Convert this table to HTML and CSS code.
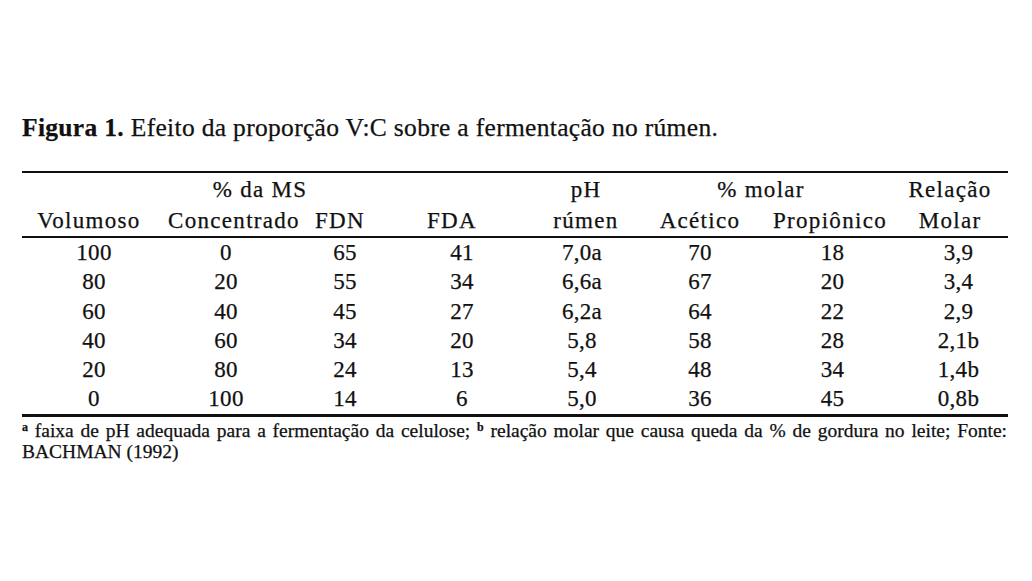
FILE: index.html
```html
<!DOCTYPE html>
<html lang="pt">
<head>
<meta charset="utf-8">
<title>Figura 1</title>
<link rel="stylesheet" href="styles.css">
</head>
<body>
<div class="page">
  <p class="title"><b>Figura 1.</b> Efeito da proporção V:C sobre a fermentação no rúmen.</p>
  <div class="tbl">
    <div class="rule top"></div>

    <div class="c h1 span4 sh-ms">% da MS</div>
    <div class="c h1 sh-ph">pH</div>
    <div class="c h1 span2 sh-molar">% molar</div>
    <div class="c h1 sh-rel">Relação</div>

    <div class="c h2 sh-vol">Volumoso</div>
    <div class="c h2 sh-conc">Concentrado</div>
    <div class="c h2 sh-fdn">FDN</div>
    <div class="c h2 sh-fda">FDA</div>
    <div class="c h2 sh-ph">rúmen</div>
    <div class="c h2">Acético</div>
    <div class="c h2 sh-prop">Propiônico</div>
    <div class="c h2 sh-rel">Molar</div>

    <div class="rule mid"></div>

    <div class="c d">100</div><div class="c d">0</div><div class="c d">65</div><div class="c d">41</div><div class="c d">7,0a</div><div class="c d">70</div><div class="c d">18</div><div class="c d">3,9</div>
    <div class="c d">80</div><div class="c d">20</div><div class="c d">55</div><div class="c d">34</div><div class="c d">6,6a</div><div class="c d">67</div><div class="c d">20</div><div class="c d">3,4</div>
    <div class="c d">60</div><div class="c d">40</div><div class="c d">45</div><div class="c d">27</div><div class="c d">6,2a</div><div class="c d">64</div><div class="c d">22</div><div class="c d">2,9</div>
    <div class="c d">40</div><div class="c d">60</div><div class="c d">34</div><div class="c d">20</div><div class="c d">5,8</div><div class="c d">58</div><div class="c d">28</div><div class="c d">2,1b</div>
    <div class="c d">20</div><div class="c d">80</div><div class="c d">24</div><div class="c d">13</div><div class="c d">5,4</div><div class="c d">48</div><div class="c d">34</div><div class="c d">1,4b</div>
    <div class="c d">0</div><div class="c d">100</div><div class="c d">14</div><div class="c d">6</div><div class="c d">5,0</div><div class="c d">36</div><div class="c d">45</div><div class="c d">0,8b</div>

    <div class="rule bottom"></div>
  </div>
  <div class="notes">
    <span class="line just"><sup>a</sup> faixa de pH adequada para a fermentação da celulose; <sup>b</sup> relação molar que causa queda da % de gordura no leite; Fonte:</span>
    <span class="line">BACHMAN (1992)</span>
  </div>
</div>
</body>
</html>
```

FILE: styles.css
```css
html, body {
  margin: 0;
  padding: 0;
  background: #ffffff;
}

body {
  font-family: "Liberation Serif", "Times New Roman", serif;
  color: #111;
  -webkit-text-stroke: 0.25px #111;
}

.page {
  width: 986px;
  padding: 113px 24px 0 22px;
}

.title {
  margin: 0 0 28px 0;
  font-size: 25.5px;
  line-height: 30px;
  letter-spacing: 0.32px;
  white-space: nowrap;
}

.title b {
  font-weight: bold;
}

.tbl {
  display: grid;
  grid-template-columns: 144px 120px 118px 116px 124px 112px 153px 99px;
  font-size: 23px;
}

.rule {
  grid-column: 1 / -1;
  height: 2px;
  background: #111;
}

.rule.bottom {
  height: 3px;
}

.c {
  display: flex;
  justify-content: center;
  white-space: nowrap;
}

.h1 {
  line-height: 33px;
  letter-spacing: 1.3px;
}

.h2 {
  line-height: 30px;
  letter-spacing: 1.3px;
}

.d {
  line-height: 29.3px;
  letter-spacing: 0.3px;
}

.span4 { grid-column: span 4; }
.span2 { grid-column: span 2; }

.sh-ms { padding-right: 22px; }
.sh-molar { padding-right: 31px; }
.sh-rel { padding-right: 17px; }
.sh-ph { padding-left: 8px; }
.sh-vol { padding-right: 10px; }
.sh-conc { padding-left: 16px; }
.sh-fdn { padding-right: 10px; }
.sh-fda { padding-right: 20px; }
.sh-prop { padding-right: 5px; }

.notes {
  padding-top: 3px;
  font-size: 19.5px;
  line-height: 21px;
  width: 985px;
}

.line {
  display: block;
  white-space: nowrap;
}

.line.just {
  white-space: normal;
  text-align: justify;
  text-align-last: justify;
}

.notes sup {
  font-size: 12px;
  font-weight: bold;
  line-height: 0;
  vertical-align: 6px;
}
```
